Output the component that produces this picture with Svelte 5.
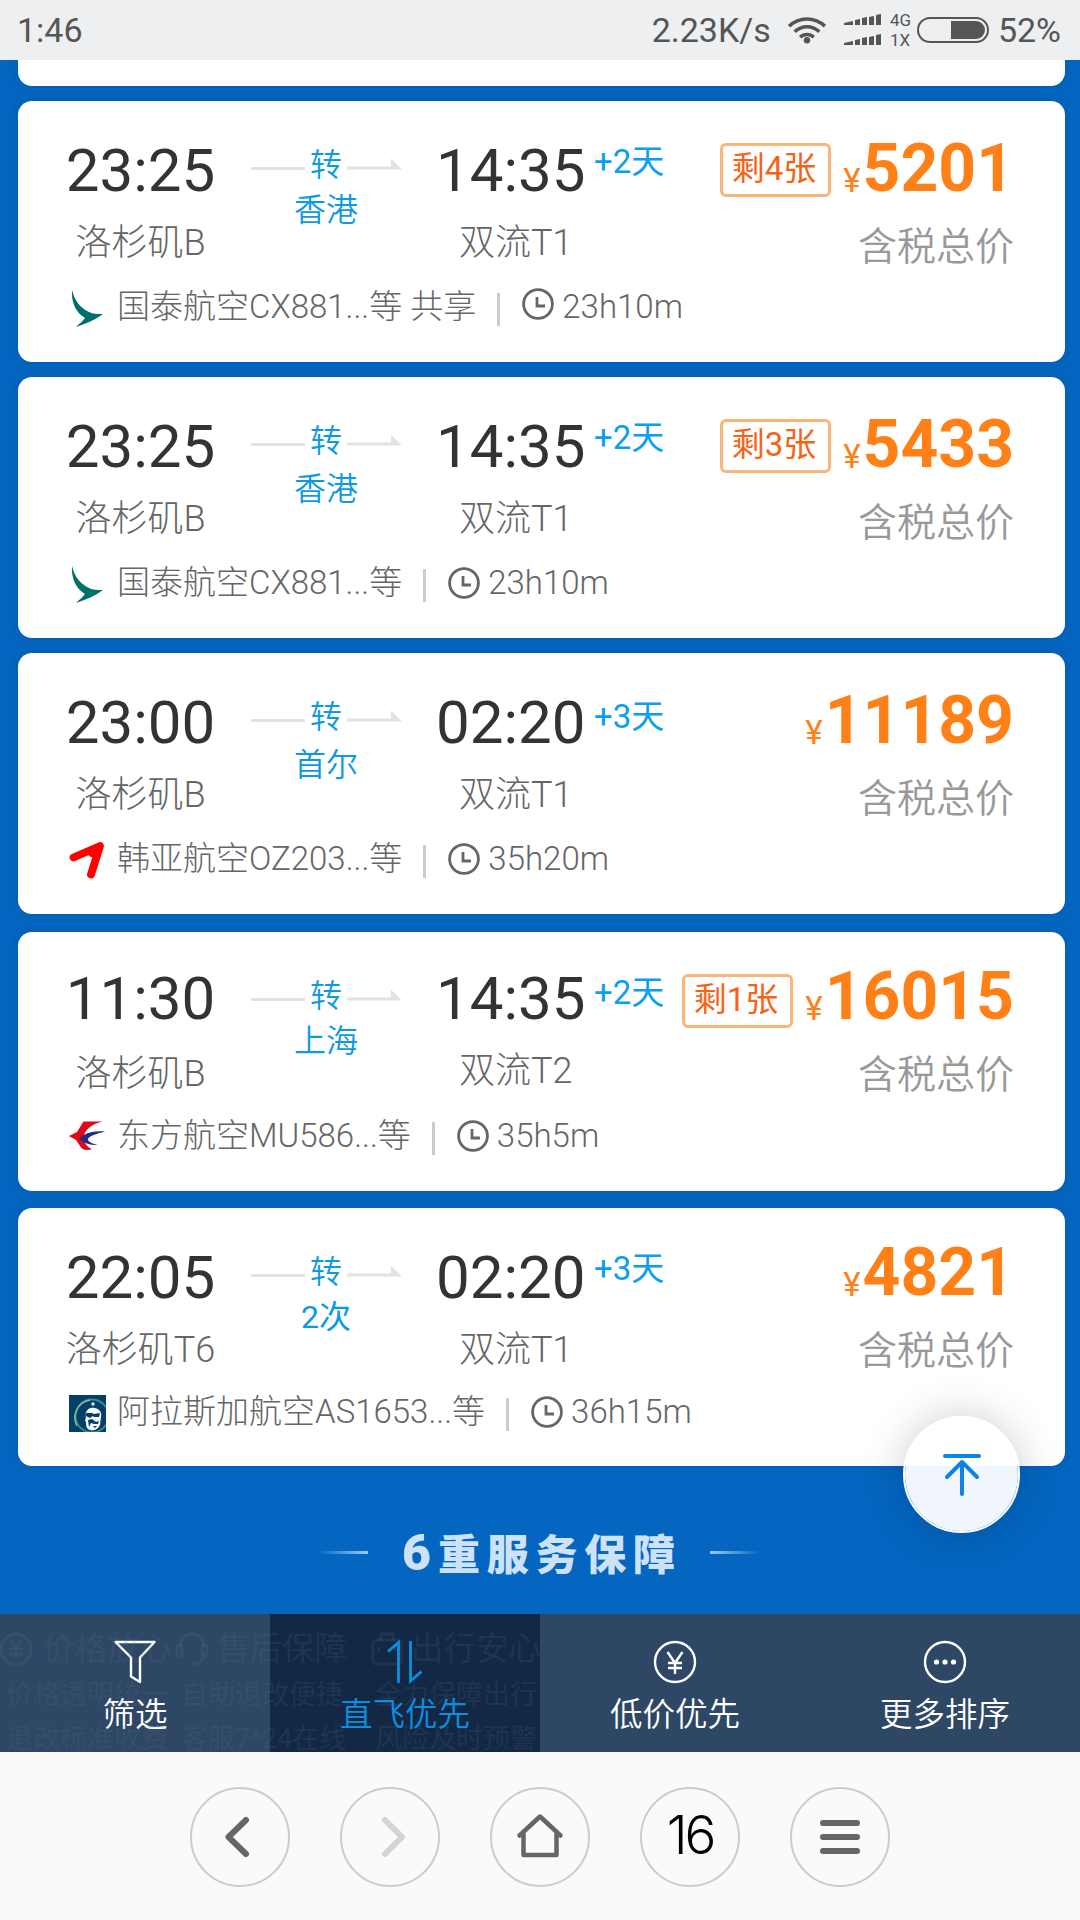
<script>
	const flights = [
		{ dep: '23:25', from: '洛杉矶B', via: '香港', arr: '14:35', to: '双流T1', days: '+2天', left: '剩4张', price: '5201', logo: 'cathay', airline: '国泰航空CX881...等 共享', duration: '23h10m' },
		{ dep: '23:25', from: '洛杉矶B', via: '香港', arr: '14:35', to: '双流T1', days: '+2天', left: '剩3张', price: '5433', logo: 'cathay', airline: '国泰航空CX881...等', duration: '23h10m' },
		{ dep: '23:00', from: '洛杉矶B', via: '首尔', arr: '02:20', to: '双流T1', days: '+3天', price: '11189', logo: 'asiana', airline: '韩亚航空OZ203...等', duration: '35h20m' },
		{ dep: '11:30', from: '洛杉矶B', via: '上海', arr: '14:35', to: '双流T2', days: '+2天', left: '剩1张', price: '16015', logo: 'eastern', airline: '东方航空MU586...等', duration: '35h5m' },
		{ dep: '22:05', from: '洛杉矶T6', via: '2次', arr: '02:20', to: '双流T1', days: '+3天', price: '4821', logo: 'alaska', airline: '阿拉斯加航空AS1653...等', duration: '36h15m' }
	]

	const services = [
		{ title: '价格放心', lines: ['价格透明统一', '退改标准收费'] },
		{ title: '售后保障', lines: ['自助退改便捷', '客服7*24在线'] },
		{ title: '出行安心', lines: ['全力保障出行', '风险及时预警'] }
	]

	const tabs = ['筛选', '直飞优先', '低价优先', '更多排序']
	let activeTab = $state(1)
</script>

<div class="phone">
	<header class="status">
		<span class="clock">1:46</span>
		<span class="speed">2.23K/s</span>
		<svg class="wifi" width="38" height="28" viewBox="0 0 38 28">
			<g fill="none" stroke="#555" stroke-width="3.6">
				<path d="M1.2 10.2a25.5 25.5 0 0 1 35.6 0" />
				<path d="M6.7 15.8a17.5 17.5 0 0 1 24.6 0" />
				<path d="M12.2 21.2a9.8 9.8 0 0 1 13.6 0" />
			</g>
			<circle cx="19" cy="24.2" r="3.2" fill="#555" />
		</svg>
		<svg class="signal" width="38" height="32" viewBox="0 0 38 32" fill="#555">
			{#each [0, 20] as y}
				<path d="M0 {y + 11}v-2l9-2v4zM11 {y + 11}v-5l5-1v6zM18 {y + 11}v-7l5-1v8zM25 {y + 11}v-8l5-1v9zM32 {y + 11}v-10l5-1v11z" />
			{/each}
		</svg>
		<span class="net"><i>4G</i><i>1X</i></span>
		<svg class="battery" width="72" height="26" viewBox="0 0 72 26">
			<rect x="1" y="1" width="70" height="24" rx="12" fill="none" stroke="#555" stroke-width="2" />
			<path d="M34 4h25a9 9 0 0 1 0 18h-25z" fill="#555" />
		</svg>
		<span>52%</span>
	</header>

	<main>
		<div class="card prev"></div>
		{#each flights as f}
			<article class="card">
				<div class="trip">
					<div class="dep">
						<div class="time">{f.dep}</div>
						<div class="place">{f.from}</div>
					</div>
					<div class="route">
						<div class="line">
							<span class="dash"></span>
							<span>转</span>
							<span class="dash arrow"></span>
						</div>
						<div class="via">{f.via}</div>
					</div>
					<div class="arr">
						<div class="time">{f.arr}</div>
						<div class="place">{f.to}</div>
					</div>
					<div class="days">{f.days}</div>
					<div class="fare">
						<div class="sum">
							{#if f.left}<span class="left">{f.left}</span>{/if}
							<span class="yen">¥</span><span class="price">{f.price}</span>
						</div>
						<div class="tax">含税总价</div>
					</div>
				</div>
				<div class="info">
					<svg class="logo" width="37" height="37" viewBox="0 0 37 37">
						{#if f.logo === 'cathay'}
							<path d="M3 0c3 12 9 18 17 22 4 2 8 2 14 2C26 30 16 34 7 37c4-4 7-6 9-9C7 23 2 12 3 0z" fill="#00706a" />
						{:else if f.logo === 'asiana'}
							<path d="M4.500 15.500L31 4 22 32.500M28 7l-5 4" fill="none" stroke="#fe0000" stroke-width="7.800" stroke-linecap="round" stroke-linejoin="round" />
						{:else if f.logo === 'eastern'}
							<path d="M14.500 2.500h19c-9 2-17 7-18.500 14-1 6 2 11 8 13.500-5 2-10 1-12-3l-4-6L0 17l8-4z" fill="#e2071a" />
							<path d="M36 12.500c-12-1-22 2-25.500 7.500 4 4 10 6 18 6-7-2-10-4-9.500-6 1-3 8-5 17-7.500z" fill="#232a85" />
						{:else}
							<rect x="0" y="0" width="37" height="37" fill="#053f66" />
							<circle cx="23" cy="21" r="16.500" fill="none" stroke="#3c8c92" stroke-width="1.800" />
							<path d="M8 31A18 18 0 0 1 21 5" fill="none" stroke="#83b8a2" stroke-width="1.500" />
							<path d="M17 17c2-4 5-5 9-4 5 1 7 5 6 9l-1 8c-2 5-8 7-12 4-3-3-1-6-3-9 2-2 0-5 1-8z" fill="#f5f8fa" />
							<path d="M17 18l6 0 2 1 6-1-1 4h-5l-1-1-3 2-4-2zM19 25l4-1 4 3 3-1-1 3-4 0-3-1-2 4zM24 31h4l-2 2z" fill="#053f66" />
							<circle cx="24" cy="9" r="1.800" fill="#cfe0de" />
						{/if}
					</svg>
					<span class="airline">{f.airline}</span>
					<span class="sep"></span>
					<svg class="dial" width="32" height="32" viewBox="0 0 32 32" fill="none" stroke="#666" stroke-width="2.800">
						<circle cx="16" cy="16" r="14.400" />
						<path d="M15 9v9h8" />
					</svg>
					<span>{f.duration}</span>
				</div>
			</article>
		{/each}

		<h2><span class="fade"></span><b>6重服务保障</b><span class="fade right"></span></h2>
	</main>

	<button class="to-top" aria-label="top">
		<svg width="40" height="44" viewBox="0 0 40 44" fill="none" stroke="#0a84e8" stroke-width="4" stroke-linecap="round" stroke-linejoin="round">
			<path d="M3 3h34M20 10v31M5 24l15-15 15 15" />
		</svg>
	</button>

	<nav class="tabs">
		<div class="services">
			{#each services as s, i}
				<div class="service">
					<div class="title">
						<svg width="34" height="36" viewBox="0 0 34 36" fill="none" stroke="currentColor" stroke-width="3">
							{#if i === 0}
								<circle cx="16" cy="18" r="15" />
								<path d="M10 9l6 8 6-8M9 18h14M9 23h14M16 17v10" />
							{:else if i === 1}
								<path d="M5 15a12 12 0 0 1 24 0M29 22c0 7-5 11-10 11M15 33h6" />
								<rect x="2" y="14" width="5" height="11" rx="2" />
								<rect x="27" y="14" width="5" height="11" rx="2" />
							{:else}
								<rect x="4" y="9" width="28" height="24" rx="4" />
								<path d="M12 9V3h12v6M10 16v4M26 16v4" />
							{/if}
						</svg>
						{s.title}
					</div>
					{#each s.lines as l}<p>{l}</p>{/each}
				</div>
			{/each}
		</div>
		{#each tabs as t, i}
			<button class="tab" class:active={activeTab === i} onclick={() => (activeTab = i)}>
				<svg width="44" height="44" viewBox="0 0 44 44" fill="none" stroke="currentColor" stroke-width="2.400">
					{#if i === 0}
						<path d="M2.500 2h39L27 17.500V42l-9-5.500v-19z" stroke-linejoin="round" />
					{:else if i === 1}
						<path d="M5 11.500L15.500 2.500V43M27.500 1v40l11-9.500" stroke-width="2.800" />
					{:else if i === 2}
						<circle cx="22" cy="22" r="20" />
						<path d="M14.500 12l7.500 11 7.500-11M15 23h14M15 28h14M22 23v11" />
					{:else}
						<circle cx="22" cy="22" r="20" />
						<g fill="currentColor" stroke="none">
							<circle cx="13.500" cy="22" r="2.600" /><circle cx="22" cy="22" r="2.600" /><circle cx="30.500" cy="22" r="2.600" />
						</g>
					{/if}
				</svg>
				<span>{t}</span>
			</button>
		{/each}
	</nav>

	<footer class="browser">
		<button aria-label="back">
			<svg width="50" height="50" viewBox="0 0 50 50"><path d="M31 8L13.500 25 31 42" /></svg>
		</button>
		<button class="off" aria-label="forward">
			<svg width="50" height="50" viewBox="0 0 50 50"><path d="M20 8l17 17-17 17" /></svg>
		</button>
		<button aria-label="home">
			<svg class="home" width="50" height="50" viewBox="0 0 50 50"><path d="M4.500 23.500L25 4.500l20.500 19M8.500 21v22h33V21" /></svg>
		</button>
		<button class="pages">16</button>
		<button aria-label="menu">
			<svg width="50" height="50" viewBox="0 0 50 50"><path d="M8 11h34M8 25h34M8 39h34" /></svg>
		</button>
	</footer>
</div>

<style>
	:global(body) {
		margin: 0;
	}
	.phone {
		position: relative;
		display: flex;
		flex-direction: column;
		width: 1080px;
		height: 1920px;
		overflow: hidden;
		background: #0466c0;
		font-family: Roboto, "Noto Sans CJK SC", sans-serif;
		color: #666;
	}
	button {
		margin: 0;
		padding: 0;
		border: 0;
		background: none;
		font-family: inherit;
		color: inherit;
	}
	svg {
		display: block;
		flex: none;
	}

	/* status bar */
	.status {
		position: relative;
		z-index: 1;
		flex: none;
		display: flex;
		align-items: center;
		box-sizing: border-box;
		height: 60px;
		padding: 0 19px 0 17px;
		background: #edeff1;
		font-size: 34px;
		line-height: 60px;
		color: #555;
	}
	.clock {
		flex: 1;
	}
	.wifi {
		margin-left: 17px;
	}
	.signal {
		margin-left: 18px;
	}
	.net {
		display: flex;
		flex-direction: column;
		width: 26px;
		margin-left: 8px;
		font-size: 17px;
		line-height: 20px;
	}
	.net i {
		font-style: normal;
	}
	.battery {
		margin: 0 9px 0 1px;
	}

	/* flight cards */
	main {
		flex: 1;
		min-height: 0;
	}
	.card {
		box-sizing: border-box;
		height: 261px;
		margin: 0 15px 15px 18px;
		border-radius: 14px;
		background: #fff;
		box-shadow: 0 0 10px rgba(20, 60, 110, 0.25);
	}
	.card.prev {
		height: 26px;
		border-radius: 0 0 14px 14px;
	}
	.card:nth-child(4) {
		margin-bottom: 18px;
	}
	.card:nth-child(5) {
		height: 259px;
		margin-bottom: 17px;
	}
	.card:nth-child(6) {
		height: 258px;
		margin-bottom: 0;
	}
	.trip {
		display: flex;
		align-items: flex-start;
		height: 189px;
		padding: 0 51px 0 37.500px;
	}
	.card:nth-child(n + 5) .trip {
		height: 187px;
	}
	.time {
		padding-top: 40px;
		font-size: 60px;
		line-height: 60px;
		color: #333;
	}
	.card:nth-child(5) .time {
		padding-top: 37px;
		padding-bottom: 3px;
	}
	.card:nth-child(5) .arr .time {
		padding-bottom: 0;
	}
	.place {
		padding-top: 24px;
		font-size: 36px;
		font-weight: 300;
		line-height: 36px;
	}
	.dep {
		width: 170px;
		text-align: center;
	}
	.route {
		width: 150px;
		margin-left: 25.500px;
		padding-top: 48px;
		text-align: center;
		font-size: 32px;
		font-weight: 350;
		line-height: 32px;
		color: #0c9ae0;
	}
	.line {
		display: flex;
		align-items: center;
		justify-content: space-between;
	}
	.dash {
		width: 54px;
		height: 3px;
		margin-top: 6px;
		background: #e2e2e2;
	}
	.arrow {
		height: 11px;
		margin-top: -2px;
		clip-path: polygon(0 8px, 44px 8px, 44px 0, 55px 11px, 0 11px);
	}
	.via {
		padding-top: 13px;
	}
	.card:nth-child(3) .via,
	.card:nth-child(4) .via {
		padding-top: 16px;
	}
	.card:nth-child(6) .via {
		font-weight: 400;
	}
	.arr {
		width: 150px;
		margin-left: 35px;
	}
	.arr .place {
		padding-left: 23px;
	}
	.days {
		padding-top: 45px;
		margin-left: 8px;
		font-size: 33px;
		line-height: 32px;
		color: #0aa0f0;
	}
	.card:nth-child(4) .days {
		padding-top: 48px;
	}
	.fare {
		flex: 1;
		padding-top: 35px;
		text-align: right;
	}
	.card:nth-child(n + 5) .fare {
		padding-top: 32px;
	}
	.sum {
		display: flex;
		justify-content: flex-end;
		color: #ff8016;
	}
	.left {
		box-sizing: border-box;
		height: 54px;
		margin: 7px 12px 0 0;
		padding: 0 12px 0 9px;
		border: 3px solid #fab578;
		border-radius: 6px;
		font-size: 33px;
		line-height: 46px;
		color: #f56414;
	}
	.card:nth-child(5) .left {
		margin-top: 10px;
	}
	.yen {
		padding-top: 28px;
		margin-right: 2px;
		font-size: 33px;
		line-height: 33px;
	}
	.price {
		font-size: 66px;
		font-weight: 700;
		line-height: 66px;
	}
	.tax {
		padding-top: 26px;
		font-size: 39px;
		font-weight: 350;
		line-height: 39px;
		color: #999;
	}
	.info {
		display: flex;
		align-items: center;
		height: 33px;
		padding-left: 51px;
		font-size: 33px;
		font-weight: 300;
		line-height: 33px;
		white-space: pre;
	}
	.logo {
		margin-top: 4px;
	}
	.airline {
		margin-left: 11px;
	}
	.sep {
		width: 3px;
		height: 33px;
		margin: 6px 22px 0 21px;
		background: #ccc;
	}
	.dial {
		margin-right: 8px;
	}
	.card:nth-child(2) .dial {
		margin-bottom: 5px;
	}

	h2 {
		display: flex;
		align-items: center;
		justify-content: center;
		gap: 34px;
		margin: 60px 2px 0 0;
		font-size: 42px;
		line-height: 54px;
		color: #cde2f7;
	}
	h2 b {
		margin-right: -6px;
		font-weight: 900;
		letter-spacing: 6.800px;
	}
	h2 b::first-letter {
		font-size: 50px;
	}
	.fade {
		width: 50px;
		height: 3px;
		margin-bottom: 4px;
		background: linear-gradient(to left, #9cccf8, #0466c0);
	}
	.fade.right {
		background: linear-gradient(to right, #9cccf8, #0466c0);
	}

	.to-top {
		position: absolute;
		left: 903px;
		top: 1416px;
		display: flex;
		align-items: center;
		justify-content: center;
		width: 117px;
		height: 117px;
		border: 2px solid #fff;
		border-radius: 50%;
		background: rgba(255, 255, 255, 0.94);
		background-clip: padding-box;
		box-shadow: 0 0 44px rgba(0, 0, 0, 0.2);
	}

	/* sort tabs */
	.tabs {
		position: relative;
		flex: none;
		display: grid;
		grid-template-columns: repeat(4, 1fr);
		height: 138px;
		background: #2d4765;
	}
	.tab {
		display: flex;
		flex-direction: column;
		align-items: center;
		padding-top: 26px;
		font-size: 32.500px;
		font-weight: 350;
		line-height: 33px;
		color: #fff;
	}
	.tab span {
		margin-top: 15px;
	}
	.tab.active {
		background: #122845;
		color: #0d8fe0;
	}
	.services {
		position: absolute;
		inset: 0 auto 0 0;
		display: grid;
		grid-template-columns: 175px 194px 171px;
		width: 540px;
		overflow: hidden;
		color: rgba(100, 120, 135, 0.17);
		pointer-events: none;
	}
	.title {
		display: flex;
		align-items: center;
		gap: 8px;
		padding-top: 17px;
		font-size: 32.500px;
		line-height: 36px;
		white-space: nowrap;
	}
	.service p {
		margin: 12px 0 0 6px;
		font-size: 27px;
		line-height: 32px;
		white-space: nowrap;
	}

	/* browser bar */
	.browser {
		flex: none;
		display: flex;
		justify-content: center;
		align-items: center;
		gap: 50px;
		box-sizing: border-box;
		height: 168px;
		padding-top: 2px;
		background: #fafafa;
	}
	.browser button {
		display: flex;
		align-items: center;
		justify-content: center;
		box-sizing: border-box;
		width: 100px;
		height: 100px;
		border: 2px solid #ccc;
		border-radius: 50%;
	}
	.browser svg {
		fill: none;
		stroke: #666;
		stroke-width: 6;
		stroke-linecap: round;
		stroke-linejoin: round;
	}
	.browser .home {
		stroke-width: 4.500;
	}
	.browser .off svg {
		stroke: #d4d4d4;
	}
	.browser .pages {
		padding-bottom: 4px;
		font-family: Inter, sans-serif;
		font-size: 53px;
		font-weight: 350;
		letter-spacing: -3px;
		color: #000;
	}
</style>
